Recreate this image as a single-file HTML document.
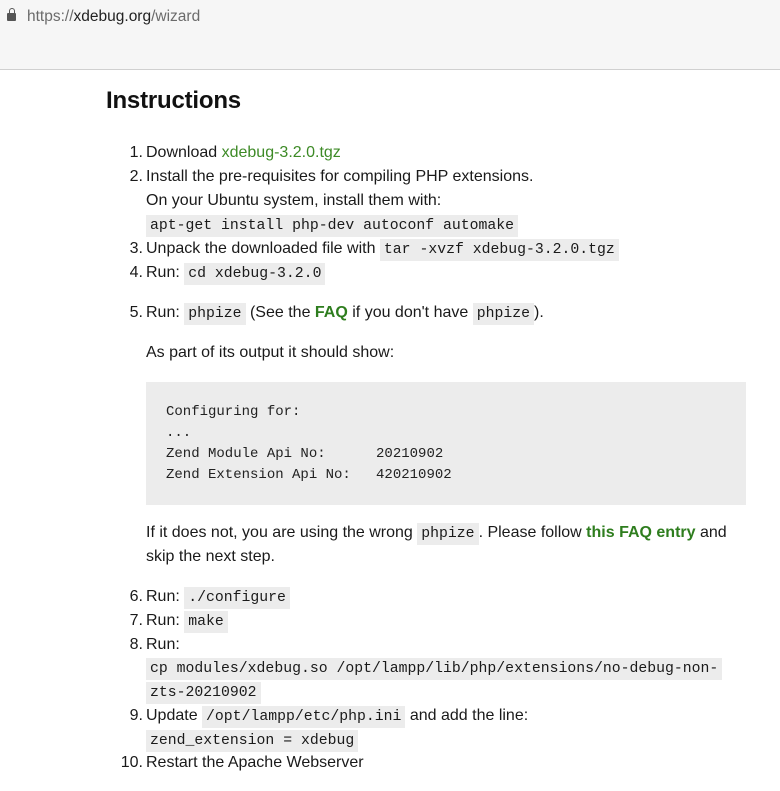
<!DOCTYPE html>
<html><head><meta charset="utf-8"><style>
*{margin:0;padding:0;box-sizing:border-box}
body{width:780px;height:791px;background:#fff;font-family:"Liberation Sans",sans-serif;color:#1a1a1a;position:relative;overflow:hidden;font-size:16px}
.bar{position:absolute;left:0;top:0;width:780px;height:70px;background:#f6f6f6;border-bottom:1px solid #d0d0d0}
.url{position:absolute;left:27px;top:8px;font-size:15.5px;color:#6b6b6b}
.url b{font-weight:normal;color:#222}
.lock{position:absolute;left:7px;top:13px;width:9px;height:8px;background:#555;border-radius:1px}
.lock:before{content:"";position:absolute;left:1.5px;top:-5px;width:6px;height:6px;border:1.5px solid #555;border-bottom:none;border-radius:3px 3px 0 0;box-sizing:border-box}
h1{position:absolute;left:106px;top:87px;font-size:24px;font-weight:bold;color:#111;letter-spacing:-0.2px}
.r{position:absolute;left:146px;height:24px;line-height:24px;white-space:nowrap}
.n{position:absolute;width:40px;left:-43px;text-align:right}
code,pre{font-family:"Liberation Mono",monospace}
code{font-size:14.8px;background:#ececec;padding:3px 4px}
pre{font-size:14px}
a{color:#3d8a26;text-decoration:none}
a.b{font-weight:bold;color:#2e7d1e}
pre{position:absolute;left:146px;top:382px;width:600px;height:123px;background:#ececec;padding:20px 20px;line-height:21px;color:#222}
</style></head><body>
<div class="bar"><div class="lock"></div><div class="url">https://<b>xdebug.org</b>/wizard</div></div>
<h1>Instructions</h1>
<div class="r" style="top:141px"><span class="n">1.</span>Download <a>xdebug-3.2.0.tgz</a></div>
<div class="r" style="top:165px"><span class="n">2.</span>Install the pre-requisites for compiling PHP extensions.</div>
<div class="r" style="top:189px">On your Ubuntu system, install them with:</div>
<div class="r" style="top:213px"><code>apt-get install php-dev autoconf automake</code></div>
<div class="r" style="top:237px"><span class="n">3.</span>Unpack the downloaded file with <code>tar -xvzf xdebug-3.2.0.tgz</code></div>
<div class="r" style="top:261px"><span class="n">4.</span>Run: <code>cd xdebug-3.2.0</code></div>
<div class="r" style="top:301px"><span class="n">5.</span>Run: <code>phpize</code> (See the <a class="b">FAQ</a> if you don't have <code>phpize</code>).</div>
<div class="r" style="top:341px">As part of its output it should show:</div>
<pre>Configuring for:
...
Zend Module Api No:      20210902
Zend Extension Api No:   420210902</pre>
<div class="r" style="top:521px">If it does not, you are using the wrong <code>phpize</code>. Please follow <a class="b">this FAQ entry</a> and</div>
<div class="r" style="top:545px">skip the next step.</div>
<div class="r" style="top:585px"><span class="n">6.</span>Run: <code>./configure</code></div>
<div class="r" style="top:609px"><span class="n">7.</span>Run: <code>make</code></div>
<div class="r" style="top:633px"><span class="n">8.</span>Run:</div>
<div class="r" style="top:656px"><code>cp modules/xdebug.so /opt/lampp/lib/php/extensions/no-debug-non-</code></div>
<div class="r" style="top:680px"><code>zts-20210902</code></div>
<div class="r" style="top:704px"><span class="n">9.</span>Update <code>/opt/lampp/etc/php.ini</code> and add the line:</div>
<div class="r" style="top:728px"><code>zend_extension = xdebug</code></div>
<div class="r" style="top:751px"><span class="n">10.</span>Restart the Apache Webserver</div>
</body></html>
